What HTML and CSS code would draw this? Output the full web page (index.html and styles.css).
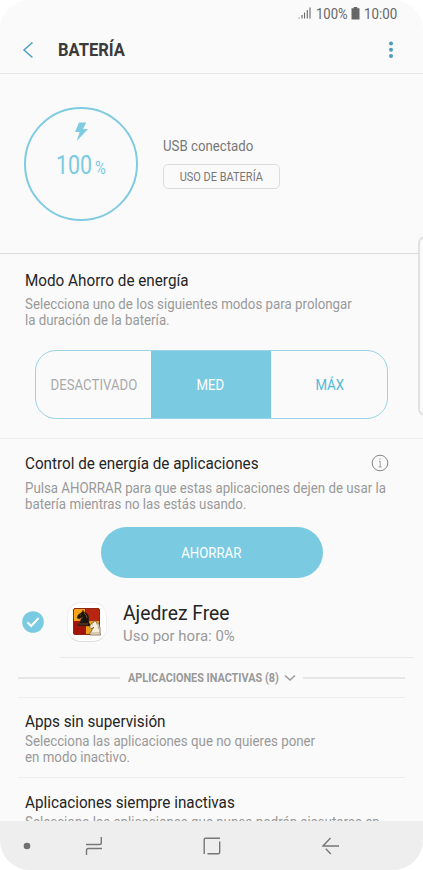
FILE: index.html
```html
<!DOCTYPE html>
<html lang="es">
<head>
<meta charset="utf-8">
<title>Batería</title>
<link rel="stylesheet" href="styles.css">
</head>
<body>
<div class="phone">
  <div class="statusbar">
    <svg class="signal" width="13" height="12" viewBox="0 0 13 12"><path d="M1 10.5v1M4 8v3.5M6.5 5.5v6M9.300 3v8.500M12 .5v11" stroke="#666" stroke-width="1.100"/></svg>
    <span class="status-text charge">100%</span>
    <svg class="cell" width="9" height="13" viewBox="0 0 9 13"><path d="M2.700 0h3.600v1.200H8.500V12.500H.5V1.200h2.200z" fill="#666"/></svg>
    <span class="status-text clock">10:00</span>
  </div>
  <header class="header">
    <svg class="back" width="12" height="18" viewBox="0 0 12 18"><path d="M10.500 1.500L2 9l8.500 7.500" fill="none" stroke="#4b9fc0" stroke-width="1.500"/></svg>
    <h1 class="title">BATERÍA</h1>
    <svg class="more" width="6" height="18" viewBox="0 0 6 18" fill="#4b9fc0"><circle cx="3" cy="2.500" r="2"/><circle cx="3" cy="8.700" r="2"/><circle cx="3" cy="15" r="2"/></svg>
  </header>

  <section class="battery">
    <div class="gauge">
      <svg class="bolt" width="13" height="20" viewBox="0 0 13 20"><path d="M4 .5h7.200L8 7h5L1.700 19.200 4.700 10H0z" fill="#7fcbe2"/></svg>
      <div class="level"><span class="level-number">100</span><span class="level-unit">%</span></div>
    </div>
    <div class="usb">
      <div class="usb-label">USB conectado</div>
      <button class="usage"><span class="usage-label">USO DE BATERÍA</span></button>
    </div>
  </section>

  <section class="mode">
    <h2>Modo Ahorro de energía</h2>
    <p>Selecciona uno de los siguientes modos para prolongar<br>la duración de la batería.</p>
    <div class="segments">
      <div class="segment off"><span>DESACTIVADO</span></div>
      <div class="segment active"><span>MED</span></div>
      <div class="segment max"><span>MÁX</span></div>
    </div>
  </section>

  <section class="control">
    <div class="control-head">
      <h2>Control de energía de aplicaciones</h2>
      <svg width="18" height="18" viewBox="0 0 18 18" fill="none" stroke="#888"><circle cx="9" cy="9" r="7.800"/><path d="M8 7.300h1.200v5.400M7.600 12.900h3" stroke-width=".8"/><path d="M8.500 5h1.200" stroke-width="1.200"/></svg>
    </div>
    <p>Pulsa AHORRAR para que estas aplicaciones dejen de usar la<br>batería mientras no las estás usando.</p>
    <button class="save"><span>AHORRAR</span></button>
    <div class="app">
      <svg class="check" width="22" height="22" viewBox="0 0 22 22"><circle cx="11" cy="11" r="10.800" fill="#7acae2"/><path d="M5.400 11.200l3.800 3.800 7.400-8" fill="none" stroke="#fff" stroke-width="2"/></svg>
      <div class="app-icon">
        <svg width="28" height="28" viewBox="0 0 28 28">
          <rect x=".5" y=".5" width="26" height="26" rx="1.500" fill="#a51408"/>
          <path d="M1 1h11v12H1z" fill="#f6a51d"/>
          <path d="M13 13h13v13H13z" fill="#e8a21d"/>
          <path d="M13 1h13v12H13z" fill="#b92510"/>
          <rect x=".5" y=".5" width="26" height="26" rx="1.500" fill="none" stroke="#8b2a0c"/>
          <path d="M5 18v-2l2-2q0-3 3-5l-4 2-2-1 1-3 4-3 1-2 1 2q5 1 5 6v5l1 1v2z" fill="#1d1510" stroke="#6c3b10" stroke-width=".5"/>
          <path d="M7 7h1M6 16h9M11 5q3 2 3 5" stroke="#9b6a38" stroke-width=".7" fill="none"/>
          <path d="M17 27v-2l1.500-2q0-2 2.500-3.500l-3 1-1.500-1.500 1.500-3 3-2 1-2 1 2q4 1 4 6v5l.8 1v1z" fill="#f6eed8" stroke="#5c4730" stroke-width=".7"/>
          <path d="M19 17h1M18 25h9M23 15q3 2 2.500 6" stroke="#a18b68" stroke-width=".7" fill="none"/>
        </svg>
      </div>
      <div class="app-text">
        <div class="app-name">Ajedrez Free</div>
        <div class="app-usage">Uso por hora: 0%</div>
      </div>
    </div>
  </section>

  <div class="inactive">
    <span class="rule"></span>
    <span class="inactive-label">APLICACIONES INACTIVAS (8)</span>
    <svg width="12" height="8" viewBox="0 0 12 8"><path d="M1 1.500l5 4.500 5-4.500" fill="none" stroke="#999" stroke-width="1.400"/></svg>
    <span class="rule"></span>
  </div>

  <section class="item">
    <h2>Apps sin supervisión</h2>
    <p>Selecciona las aplicaciones que no quieres poner<br>en modo inactivo.</p>
  </section>
  <section class="item last">
    <h2>Aplicaciones siempre inactivas</h2>
    <p>Selecciona las aplicaciones que nunca podrán ejecutarse en</p>
  </section>

  <nav class="navbar">
    <svg width="8" height="8" viewBox="0 0 8 8"><circle cx="4" cy="4" r="3.300" fill="#707070"/></svg>
    <svg class="recents" width="18" height="20" viewBox="0 0 18 20" fill="none" stroke="#777" stroke-width="1.400"><path d="M1 8.500h13.500q1.800 0 1.800-1.800V1M1.500 19v-4.700q0-1.800 1.800-1.800H17"/></svg>
    <svg class="home" width="18" height="18" viewBox="0 0 18 18" fill="none" stroke="#777" stroke-width="1.400"><path d="M1.200 17V2.700q0-1.500 1.500-1.500H17M16.700 4.500v10.700q0 1.500-1.500 1.500H4.500"/></svg>
    <svg class="return" width="18" height="18" viewBox="0 0 18 18" fill="none" stroke="#777" stroke-width="1.400"><path d="M8.500 1L1 9h16M3.800 11.800L8.800 17"/></svg>
  </nav>
  <div class="edge-handle"></div>
</div>
</body>
</html>
```
FILE: styles.css
```css
* { box-sizing: border-box; }
body { margin: 0; background: #fff; font-family: Roboto, "Liberation Sans", sans-serif; overflow: hidden; }
h1, h2, p { margin: 0; font-weight: 400; }
button { border: 0; padding: 0; background: none; font: inherit; }
span { white-space: nowrap; }
svg { display: block; flex: none; }
.phone { position: relative; width: 423px; height: 870px; background: #fafafa; border-radius: 30px; overflow: hidden; }

.statusbar { display: flex; height: 27px; padding: 7px 25px 0 0; justify-content: flex-end; color: #666; font-size: 14.500px; line-height: 15px; }
.signal { margin-right: 5px; }
.status-text { transform-origin: left; }
.charge { width: 32px; transform: scaleX(.9); }
.cell { margin: 0 4px 0 3px; }
.clock { width: 34px; transform: scaleX(.92); }

.header { display: flex; height: 47px; padding: 0 29px 0 22px; align-items: center; border-bottom: 1px solid #e8e8e8; }
.title { width: 300px; margin-left: 23.500px; font-size: 19px; font-weight: 700; line-height: 24px; color: #3b3b3b; transform: scaleX(.87); transform-origin: left; }
.more { margin-left: auto; }

.battery { display: flex; height: 180px; padding: 33px 0 0 24px; border-bottom: 1px solid #dcdcdc; }
.gauge { width: 114px; height: 114px; border: 2px solid #7fcbe2; border-radius: 50%; color: #7acae2; }
.bolt { margin: 13px auto 0 49px; }
.level { display: flex; height: 30px; padding-left: 30px; margin-top: 8px; align-items: baseline; line-height: 30px; }
.level-number { width: 39px; font-size: 26px; transform: scaleX(.82); transform-origin: left; }
.level-unit { font-size: 18px; transform: scaleX(.82); transform-origin: left; }
.usb { margin: 29px 0 0 24.500px; }
.usb-label { font-size: 14px; line-height: 20px; color: #777; white-space: nowrap; transform: scaleX(.945); transform-origin: left; }
.usage { display: flex; width: 117px; height: 25px; margin-top: 8px; align-items: center; justify-content: center; border: 1px solid #ddd; border-radius: 5px; font-size: 13px; color: #777; }
.usage-label { transform: scaleX(.845); }

h2 { font-size: 16px; line-height: 20px; color: #252525; white-space: nowrap; transform: scaleX(.953); transform-origin: left; }
p { font-size: 14px; line-height: 15.800px; color: #999; white-space: nowrap; transform: scaleX(.949); transform-origin: left; }

.mode { height: 185px; padding: 17px 0 0 25px; border-bottom: 1px solid #eee; }
.mode p { margin-top: 6px; }
.segments { display: flex; width: 353px; height: 69px; margin: 21px 0 0 10px; border: 1px solid #99d3e7; border-radius: 21px; overflow: hidden; font-size: 15.500px; }
.segment { display: flex; flex: 1; align-items: center; justify-content: center; }
.segment span { position: relative; top: 1px; transform: scaleX(.852); }
.off { color: #aaa; }
.active { flex: 0 0 120px; margin: 0 1px 0 -1px; background: #7acae2; color: #fff; }
.max { color: #4fb9da; }

.control { height: 219px; padding: 15px 0 0 25px; }
.control-head { display: flex; width: 363.500px; justify-content: space-between; }
.control p { margin-top: 7px; }
.save { display: flex; width: 222px; height: 51px; margin: 14px 0 0 75.500px; align-items: center; justify-content: center; border-radius: 26px; background: #7acae2; color: #fff; font-size: 15.500px; }
.save span { position: relative; top: 1px; transform: scaleX(.852); }
.app { display: flex; height: 80px; margin-left: -3px; align-items: center; position: relative; padding-top: 9px; }
.app-icon { display: flex; width: 40px; height: 40px; margin-left: 23px; align-items: center; justify-content: center; border: 1px solid #eee; border-bottom-color: #ddd; border-radius: 14px; background: #fff; }
.app-text { margin: 4px 0 0 16px; white-space: nowrap; transform: scaleX(.965); transform-origin: left; }
.app-name { font-size: 20px; line-height: 24px; color: #252525; }
.app-usage { font-size: 15.500px; line-height: 22px; color: #999; }
.app::after { content: ""; position: absolute; left: 38px; right: 9px; bottom: 0; height: 1px; background: #eaeaea; }

.inactive { display: flex; height: 40px; margin: 0 18px; align-items: center; border-bottom: 1px solid #eee; }
.rule { flex: 1; height: 2px; background: #e6e6e6; }
.inactive-label { width: 148px; margin: 0 8px; font-size: 13px; font-weight: 700; color: #999; transform: scaleX(.835); transform-origin: left; }
.inactive svg { margin-right: 7px; }

.item { height: 80px; margin: 0 18px; padding: 14px 0 0 7px; border-bottom: 1px solid #eee; }
.item.last { height: 43px; padding-top: 15px; border: 0; overflow: hidden; }
.item p { margin-top: 2px; }

.navbar { position: relative; display: flex; height: 49px; padding-left: 23px; align-items: center; background: #eee; }
.recents { margin-left: 54px; }
.home { margin-left: 100px; }
.return { margin-left: 101px; }
.edge-handle { position: absolute; left: 418px; top: 236px; width: 15px; height: 180px; border: 2px solid #e2e2e2; border-radius: 7px; background: #fafafa; }
```
